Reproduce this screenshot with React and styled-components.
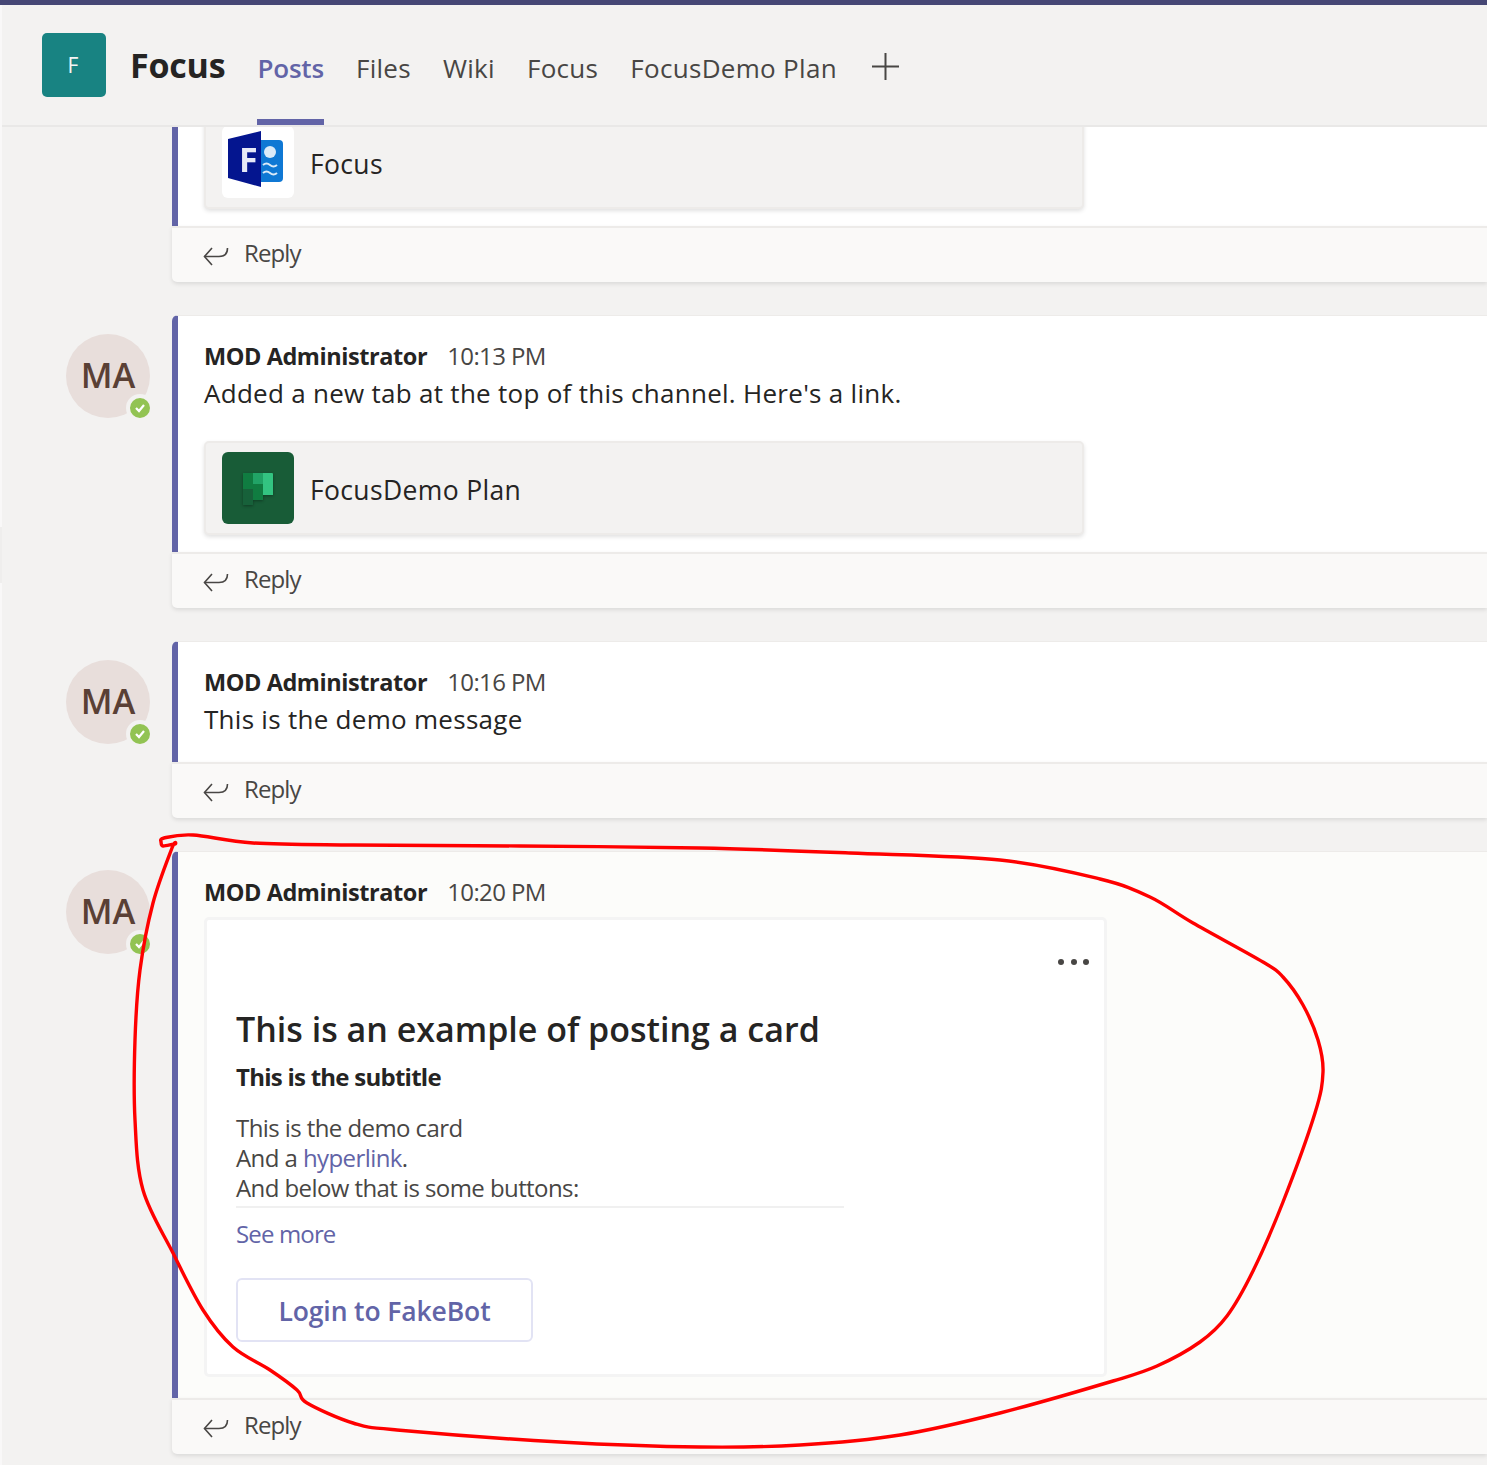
import React from "react";
import styled, { createGlobalStyle } from "styled-components";

const Global = createGlobalStyle`
  html, body { margin: 0; padding: 0; background: #f3f2f1; }
  * { box-sizing: border-box; }
`;

const Page = styled.div`
  position: relative;
  width: 1487px;
  height: 1465px;
  overflow: hidden;
  background: #f3f2f1;
  font-family: "Open Sans", "Noto Sans", sans-serif;
  color: #252423;
  display: flex;
  flex-direction: column;
`;
const TopBar = styled.div`
  height: 5px;
  flex: none;
  background: #464775;
`;
const Shell = styled.div`
  flex: 1;
  display: flex;
  min-height: 0;
`;
const Rail = styled.div`
  width: 2px;
  flex: none;
  background: #f9f8f8;
  padding-top: 522px;
`;
const RailHandle = styled.div`
  height: 56px;
  background: #efeeed;
`;
const Main = styled.div`
  flex: 1;
  min-width: 0;
  display: flex;
  flex-direction: column;
`;
const Header = styled.header`
  height: 122px;
  flex: none;
  display: flex;
  align-items: stretch;
  padding-left: 40px;
  border-bottom: 2px solid #e9e8e7;
`;
const TeamTile = styled.div`
  width: 64px;
  height: 64px;
  margin-top: 28px;
  padding-right: 2px;
  border-radius: 5px;
  background: #188382;
  color: #f4f4f4;
  font-size: 21px;
  display: flex;
  align-items: center;
  justify-content: center;
  flex: none;
`;
const TeamName = styled.div`
  margin: 0 32px 0 24px;
  padding-top: 35px;
  font-size: 34px;
  line-height: 50px;
  font-weight: 700;
  letter-spacing: -0.2px;
  color: #252423;
`;
const Tabs = styled.nav`
  display: flex;
  gap: 32px;
`;
const Tab = styled.div`
  padding-top: 43px;
  font-size: 26px;
  line-height: 40px;
  letter-spacing: ${(p) => (p.$active ? "-0.2px" : "0.3px")};
  height: 120px;
  color: ${(p) => (p.$active ? "#6264a7" : "#484644")};
  font-weight: ${(p) => (p.$active ? 600 : 400)};
  border-bottom: 6px solid ${(p) => (p.$active ? "#6264a7" : "transparent")};
`;
const AddTab = styled.div`
  margin: 47px 0 0 34px;
  width: 29px;
  height: 29px;
  color: #484644;
`;
const Feed = styled.div`
  flex: 1;
  min-height: 0;
  overflow: hidden;
  padding-left: 64px;
  display: flex;
  flex-direction: column;
  gap: 33px;
`;
const Thread = styled.article`
  display: grid;
  grid-template-columns: 84px 1fr;
  column-gap: 22px;
  align-items: start;
`;
const Avatar = styled.div`
  position: relative;
  width: 84px;
  height: 84px;
  margin-top: 19px;
  padding-bottom: 3px;
  border-radius: 50%;
  background: #e8dedb;
  color: #5a4035;
  font-size: 34.5px;
  font-weight: 600;
  display: flex;
  align-items: center;
  justify-content: center;
`;
const Presence = styled.div`
  position: absolute;
  right: -4px;
  bottom: -4px;
  width: 28px;
  height: 28px;
  border-radius: 50%;
  border: 4px solid #f3f2f1;
  background: #92c353;
  display: flex;
  align-items: center;
  justify-content: center;
`;
const Spacer = styled.div``;
const Column = styled.div`
  min-width: 0;
`;
const Body = styled.div`
  border-left: 6px solid #6264a7;
  border-top: ${(p) => (p.$clipped ? "none" : "1px solid #edebe9")};
  border-top-left-radius: ${(p) => (p.$clipped ? "0" : "6px")};
  background: ${(p) => (p.$tinted ? "#fcfcfa" : "#fff")};
  padding: ${(p) => (p.$clipped ? "0" : "25px")} 0 ${(p) => p.$bottom}px 26px;
  height: ${(p) => (p.$clipped ? "99px" : "auto")};
  overflow: hidden;
`;
const Meta = styled.div`
  display: flex;
  gap: 20px;
  line-height: 30px;
  font-size: 24px;
`;
const Sender = styled.span`
  font-weight: 700;
  letter-spacing: -0.43px;
  color: #252423;
  font-size: 23.5px;
`;
const Time = styled.span`
  color: #484644;
  letter-spacing: -0.6px;
`;
const Text = styled.div`
  margin-top: 5px;
  font-size: 26px;
  line-height: 34px;
  letter-spacing: 0.28px;
  color: #252423;
`;
const FileCard = styled.div`
  width: 880px;
  height: 94px;
  margin-top: ${(p) => p.$top}px;
  background: #f3f2f1;
  border: 2px solid #edebe9;
  border-radius: 5px;
  box-shadow: 0 2px 4px rgba(0, 0, 0, 0.12);
  padding: 9px 0 0 16px;
  display: flex;
  align-items: flex-start;
  gap: 16px;
`;
const FileIcon = styled.div`
  width: 72px;
  height: 72px;
  flex: none;
  border-radius: 6px;
  overflow: hidden;
  background: ${(p) => p.$bg};
`;
const FileName = styled.div`
  margin-top: 2px;
  font-size: 26.5px;
  line-height: 72px;
  font-weight: 500;
  letter-spacing: 0.35px;
  color: #252423;
`;
const ReplyBar = styled.div`
  height: 56px;
  background: #faf9f8;
  border-top: 2px solid #edebe9;
  border-bottom-left-radius: 5px;
  box-shadow: 0 2px 4px rgba(0, 0, 0, 0.1);
  padding-left: 31px;
  display: flex;
  align-items: center;
  gap: 15px;
  font-size: 24px;
  letter-spacing: -0.9px;
  color: #484644;
`;
const ReplyLabel = styled.span`
  margin-bottom: 5px;
`;
const CardBox = styled.div`
  width: 903px;
  height: 460px;
  margin-top: 10px;
  background: #fff;
  border: 3px solid #f4f4f4;
  border-radius: 5px;
  padding: 39px 15px 0 29px;
`;
const DotsRow = styled.div`
  display: flex;
  justify-content: flex-end;
  gap: 6.5px;
`;
const Dot = styled.span`
  width: 6px;
  height: 6px;
  border-radius: 50%;
  background: #484644;
`;
const CardTitle = styled.h2`
  margin: 39px 0 0;
  font-size: 34px;
  line-height: 50px;
  font-weight: 600;
  letter-spacing: 0px;
  color: #252423;
`;
const CardSubtitle = styled.div`
  margin-top: 8px;
  font-size: 24px;
  line-height: 30px;
  font-weight: 700;
  letter-spacing: -0.75px;
  color: #252423;
`;
const CardCopy = styled.div`
  margin-top: 21px;
  font-size: 24px;
  line-height: 30px;
  letter-spacing: -0.58px;
  color: #484644;
`;
const Link = styled.span`
  color: #6264a7;
`;
const Divider = styled.hr`
  width: 608px;
  height: 2px;
  margin: 3px 0 0;
  border: 0;
  background: #f0f0f0;
`;
const SeeMore = styled.div`
  margin-top: 11px;
  font-size: 24px;
  line-height: 30px;
  letter-spacing: -0.85px;
  color: #6264a7;
`;
const CardButton = styled.button`
  display: block;
  width: 297px;
  height: 64px;
  margin: 29px 0 0;
  padding: 2px 0 0;
  background: #fff;
  border: 2px solid #e2e3f4;
  border-radius: 6px;
  font-family: inherit;
  font-size: 26.5px;
  font-weight: 600;
  letter-spacing: -0.12px;
  color: #6264a7;
`;
const Scribble = styled.svg`
  position: absolute;
  left: 0;
  top: 0;
  pointer-events: none;
`;

const ReplyIcon = () => (
  <svg width="26" height="22" viewBox="0 0 26 22" fill="none" stroke="#484644" strokeWidth="1.6">
    <path d="M9 4 L1.5 12.5 L9 21" />
    <path d="M1.5 12.5 H16 C21 12.5 24.5 10 24.5 4" />
  </svg>
);

const Reply = () => (
  <ReplyBar>
    <ReplyIcon />
    <ReplyLabel>Reply</ReplyLabel>
  </ReplyBar>
);

const UserAvatar = () => (
  <Avatar>
    MA
    <Presence>
      <svg width="12" height="10" viewBox="0 0 12 10" fill="none" stroke="#fff" strokeWidth="2.2">
        <path d="M2 5 L5 8 L10 2" />
      </svg>
    </Presence>
  </Avatar>
);

const MessageMeta = ({ time }) => (
  <Meta>
    <Sender>MOD Administrator</Sender>
    <Time>{time}</Time>
  </Meta>
);

const FormsLogo = () => (
  <svg width="72" height="72" viewBox="0 0 72 72">
    <g style={{ filter: "blur(0.6px)" }}>
      <rect x="34" y="14" width="27" height="42" rx="4" fill="#0f78d4" />
      <circle cx="48" cy="26" r="6" fill="#dbeaf8" />
      <path d="M41 39 q3.5 -3 7 0 t7 0 M41 47 q3.5 -3 7 0 t7 0" fill="none" stroke="#dbeaf8" strokeWidth="2" />
      <path d="M6 13 L39 5 V61 L6 52 Z" fill="#04158f" />
      <text x="17" y="46" fontFamily="Open Sans, sans-serif" fontWeight="700" fontSize="34" fill="#e6e9f7">F</text>
    </g>
  </svg>
);

const PlannerLogo = () => (
  <svg width="72" height="72" viewBox="0 0 72 72">
    <g style={{ filter: "drop-shadow(0 1px 1.5px rgba(0,0,0,0.35))" }}>
      <rect x="21" y="21" width="10" height="16" fill="#107c41" />
      <rect x="21" y="37" width="10" height="16" fill="#17613a" />
      <rect x="31" y="21" width="10" height="11" fill="#21a366" />
      <rect x="31" y="32" width="10" height="16" fill="#107c41" />
      <path d="M41 21 H50 a1 1 0 0 1 1 1 V43 H41 Z" fill="#33c481" />
    </g>
  </svg>
);

const points = [
  [161, 842], [164, 838], [193, 835], [253, 843], [353, 845], [520, 846], [700, 848],
  [850, 853], [1000, 860], [1100, 879], [1150, 897], [1193, 923], [1263, 962], [1283, 977],
  [1303, 1005], [1318, 1040], [1323, 1072], [1315, 1113], [1283, 1202], [1253, 1271], [1227, 1316],
  [1200, 1342], [1157, 1366], [1113, 1381], [1000, 1413], [900, 1435], [800, 1445],
  [700, 1447], [560, 1442], [397, 1430], [353, 1423], [307, 1403], [297, 1390], [270, 1370],
  [233, 1347], [203, 1310], [173, 1253], [143, 1190], [135, 1120], [135, 1040], [140, 970],
  [153, 903], [172, 848], [175, 844], [163, 846], [161, 842],
];

const smoothPath = (pts) => {
  let d = `M${pts[0][0]} ${pts[0][1]}`;
  for (let i = 0; i < pts.length - 1; i += 1) {
    const p0 = pts[Math.max(i - 1, 0)];
    const p1 = pts[i];
    const p2 = pts[i + 1];
    const p3 = pts[Math.min(i + 2, pts.length - 1)];
    const c1x = p1[0] + (p2[0] - p0[0]) / 6;
    const c1y = p1[1] + (p2[1] - p0[1]) / 6;
    const c2x = p2[0] - (p3[0] - p1[0]) / 6;
    const c2y = p2[1] - (p3[1] - p1[1]) / 6;
    d += ` C${c1x} ${c1y} ${c2x} ${c2y} ${p2[0]} ${p2[1]}`;
  }
  return d;
};

export default function App() {
  return (
    <Page>
      <Global />
      <TopBar />
      <Shell>
        <Rail>
          <RailHandle />
        </Rail>
        <Main>
          <Header>
            <TeamTile>F</TeamTile>
            <TeamName>Focus</TeamName>
            <Tabs>
              <Tab $active>Posts</Tab>
              <Tab>Files</Tab>
              <Tab>Wiki</Tab>
              <Tab>Focus</Tab>
              <Tab>FocusDemo Plan</Tab>
            </Tabs>
            <AddTab>
              <svg width="29" height="29" viewBox="0 0 29 29" stroke="currentColor" strokeWidth="2">
                <path d="M14.5 1 V28 M1 14.5 H28" />
              </svg>
            </AddTab>
          </Header>
          <Feed>
            <Thread>
              <Spacer />
              <Column>
                <Body $clipped $bottom={0}>
                  <FileCard $top={-12}>
                    <FileIcon $bg="#fff">
                      <FormsLogo />
                    </FileIcon>
                    <FileName>Focus</FileName>
                  </FileCard>
                </Body>
                <Reply />
              </Column>
            </Thread>
            <Thread>
              <UserAvatar />
              <Column>
                <Body $bottom={17}>
                  <MessageMeta time="10:13 PM" />
                  <Text>Added a new tab at the top of this channel. Here's a link.</Text>
                  <FileCard $top={31}>
                    <FileIcon $bg="#185c37">
                      <PlannerLogo />
                    </FileIcon>
                    <FileName>FocusDemo Plan</FileName>
                  </FileCard>
                </Body>
                <Reply />
              </Column>
            </Thread>
            <Thread>
              <UserAvatar />
              <Column>
                <Body $bottom={26}>
                  <MessageMeta time="10:16 PM" />
                  <Text>This is the demo message</Text>
                </Body>
                <Reply />
              </Column>
            </Thread>
            <Thread>
              <UserAvatar />
              <Column>
                <Body $tinted $bottom={21}>
                  <MessageMeta time="10:20 PM" />
                  <CardBox>
                    <DotsRow>
                      <Dot />
                      <Dot />
                      <Dot />
                    </DotsRow>
                    <CardTitle>This is an example of posting a card</CardTitle>
                    <CardSubtitle>This is the subtitle</CardSubtitle>
                    <CardCopy>
                      This is the demo card
                      <br />
                      And a <Link>hyperlink</Link>.
                      <br />
                      And below that is some buttons:
                    </CardCopy>
                    <Divider />
                    <SeeMore>See more</SeeMore>
                    <CardButton>Login to FakeBot</CardButton>
                  </CardBox>
                </Body>
                <Reply />
              </Column>
            </Thread>
          </Feed>
        </Main>
      </Shell>
      <Scribble width="1487" height="1465" viewBox="0 0 1487 1465" fill="none">
        <path d={smoothPath(points)} stroke="#ff0000" strokeWidth="3.4" strokeLinejoin="round" strokeLinecap="round" />
      </Scribble>
    </Page>
  );
}
